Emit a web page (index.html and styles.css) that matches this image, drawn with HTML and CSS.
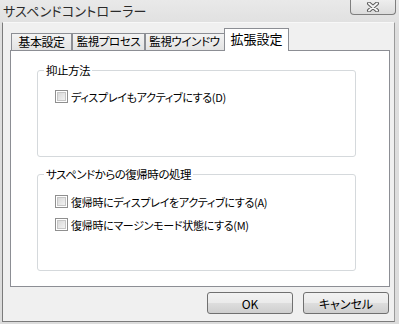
FILE: index.html
```html
<!DOCTYPE html>
<html lang="ja">

<head>
    <meta charset="UTF-8">
    <title>サスペンドコントローラー</title>
    <link rel="stylesheet" href="styles.css">
</head>

<body>
    <div class="window">
        <div class="titlebar">
            <span class="title">サスペンドコントローラー</span>
            <button class="close" type="button">
                <svg width="14" height="10" viewBox="0 0 14 10">
                    <path d="M3 1.5 L11 8.5 M11 1.5 L3 8.5" stroke="#5a5a5a" stroke-width="4" stroke-linecap="round" />
                    <path d="M3 1.5 L11 8.5 M11 1.5 L3 8.5" stroke="#f4f4f4" stroke-width="2" stroke-linecap="round" />
                </svg>
            </button>
        </div>

        <div class="client">
            <div class="tabs">
                <div class="tab tab-basic">基本設定</div>
                <div class="tab tab-process">監視プロセス</div>
                <div class="tab tab-window">監視ウインドウ</div>
                <div class="tab tab-ext active">拡張設定</div>
            </div>

            <div class="panel">
                <fieldset class="group group-1">
                    <legend>抑止方法</legend>
                    <label class="check"><span class="box"></span>ディスプレイもアクティブにする(D)</label>
                </fieldset>

                <fieldset class="group group-2">
                    <legend>サスペンドからの復帰時の処理</legend>
                    <label class="check"><span class="box"></span>復帰時にディスプレイをアクティブにする(A)</label>
                    <label class="check"><span class="box"></span>復帰時にマージンモード状態にする(M)</label>
                </fieldset>
            </div>

            <div class="buttons">
                <button type="button" class="btn">OK</button>
                <button type="button" class="btn">キャンセル</button>
            </div>
        </div>
    </div>
</body>

</html>
```

FILE: styles.css
```css
* {
    margin: 0;
    padding: 0;
    box-sizing: border-box;
}

body {
    font-family: "Noto Sans CJK JP", "Liberation Sans", sans-serif;
    font-size: 12px;
    color: #000;
    background: #e4e4e4;
}

.window {
    width: 399px;
    height: 324px;
    background: linear-gradient(#e9e9e9, #dedede 30px, #dcdcdc);
    display: flex;
    flex-direction: column;
}

/* barra de titulo */
.titlebar {
    height: 22px;
    display: flex;
    align-items: flex-start;
}

.title {
    margin: 3px 0 0 3px;
    font-size: 13px;
    line-height: 16px;
    color: #2a2a2a;
    font-feature-settings: "palt";
    letter-spacing: 0.2px;
}

.close {
    margin-left: auto;
    margin-right: 3px;
    width: 46px;
    height: 15px;
    border: 1px solid #7e7e7e;
    border-top: none;
    border-radius: 0 0 4px 4px;
    background: linear-gradient(#eeeeee, #dcdcdc);
    display: flex;
    justify-content: center;
    align-items: center;
}

/* area cliente */
.client {
    margin: 0 4px 2px 2px;
    flex: 1;
    background: #f0f0f0;
    border-left: 1px solid #7b7b7b;
    border-top: 1px solid #f8f8f8;
    border-right: 1px solid #9a9a9a;
    border-bottom: 1px solid #7b7b7b;
    padding: 5px 0 0 7px;
}

.tabs {
    display: flex;
    align-items: flex-end;
    height: 22px;
    padding-left: 1px;
    position: relative;
    z-index: 1;
}

.tab {
    height: 17px;
    line-height: 15px;
    text-align: center;
    border: 1px solid #8c8e94;
    border-bottom: none;
    background: linear-gradient(#f3f3f3, #e3e3e3);
    font-size: 11.5px;
    font-feature-settings: "palt";
    letter-spacing: -0.4px;
    white-space: nowrap;
}

.tab-basic {
    width: 61px;
    font-size: 12px;
}

.tab-process {
    width: 73px;
}

.tab-window {
    width: 81px;
    padding-right: 2px;
}

.tab-ext {
    width: 65px;
}

.tab.active {
    height: 23px;
    margin-left: -2px;
    margin-bottom: -1px;
    line-height: 19px;
    background: #fff;
    font-size: 13px;
    letter-spacing: 0;
}

.panel {
    width: 380px;
    height: 237px;
    background: #fff;
    border: 1px solid #8c8e94;
    padding: 0 0 0 26px;
}

.group {
    width: 319px;
    border: 1px solid #d5d9dc;
    border-radius: 3px;
}

.group legend {
    margin-left: 6px;
    padding: 0 2px;
    line-height: 14px;
    font-size: 11.5px;
    font-feature-settings: "palt";
    letter-spacing: -0.5px;
}

.group-1 {
    margin-top: 12px;
    height: 94px;
    padding-top: 8px;
}

.group-2 {
    margin-top: 10px;
    height: 104px;
    padding-top: 9px;
}

.check {
    display: flex;
    align-items: center;
    height: 23px;
    padding-left: 17px;
    font-size: 11px;
    font-feature-settings: "palt";
    letter-spacing: -0.3px;
    white-space: nowrap;
}

.box {
    width: 13px;
    height: 13px;
    margin-right: 3px;
    border: 1px solid #8f8f8f;
    background: #fff;
    position: relative;
}

.box::after {
    content: "";
    position: absolute;
    inset: 1px;
    border: 1px solid #c6c6c6;
    background: linear-gradient(135deg, #d9d9d9, #f2f2f2);
}

/* botoes */
.buttons {
    display: flex;
    justify-content: flex-end;
    gap: 10px;
    margin: 5px 5px 0 0;
}

.btn {
    width: 86px;
    height: 22px;
    border: 1px solid #707070;
    border-radius: 3px;
    background: linear-gradient(#f2f2f2 0%, #ebebeb 48%, #dddddd 52%, #cfcfcf 100%);
    font-family: "Noto Sans CJK JP", "Liberation Sans", sans-serif;
    font-size: 12px;
    font-feature-settings: "palt";
    color: #000;
}
```
